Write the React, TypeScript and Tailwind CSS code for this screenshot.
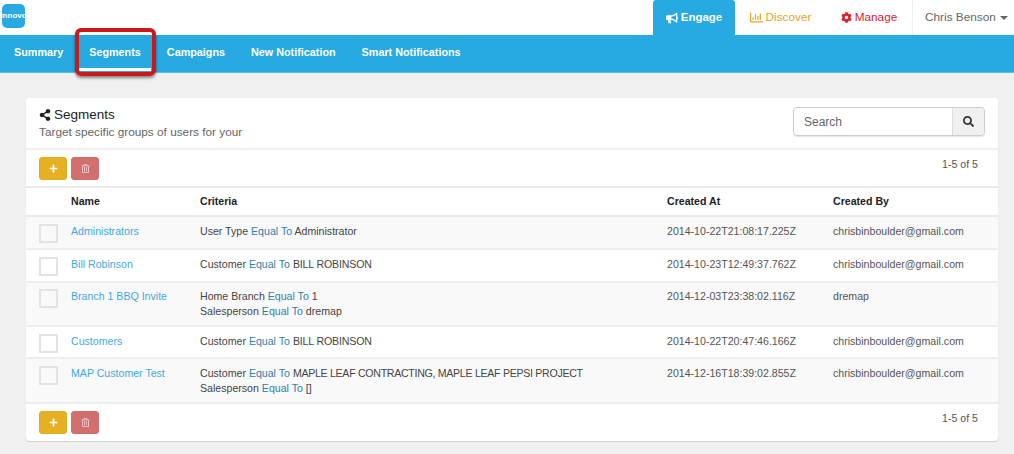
import React from "react";
import { FaBullhorn, FaCog, FaPlus, FaRegChartBar, FaRegTrashAlt, FaSearch, FaShareAlt } from "react-icons/fa";

const rows = [
  {
    name: "Administrators",
    criteria: [["User Type", "Administrator", ""]],
    createdAt: "2014-10-22T21:08:17.225Z",
    createdBy: "chrisbinboulder@gmail.com",
    height: "h-[33px] pt-[7px]",
  },
  {
    name: "Bill Robinson",
    criteria: [["Customer", "BILL ROBINSON", "tracking-[-0.15px]"]],
    createdAt: "2014-10-23T12:49:37.762Z",
    createdBy: "chrisbinboulder@gmail.com",
    height: "h-[33px] pt-[7px]",
  },
  {
    name: "Branch 1 BBQ Invite",
    criteria: [
      ["Home Branch", "1", ""],
      ["Salesperson", "dremap", ""],
    ],
    createdAt: "2014-12-03T23:38:02.116Z",
    createdBy: "dremap",
    height: "h-[44px] pt-[6px]",
  },
  {
    name: "Customers",
    criteria: [["Customer", "BILL ROBINSON", "tracking-[-0.15px]"]],
    createdAt: "2014-10-22T20:47:46.166Z",
    createdBy: "chrisbinboulder@gmail.com",
    height: "h-[32px] pt-[7px]",
  },
  {
    name: "MAP Customer Test",
    criteria: [
      ["Customer", "MAPLE LEAF CONTRACTING, MAPLE LEAF PEPSI PROJECT", "tracking-[-0.29px]"],
      ["Salesperson", "[]", ""],
    ],
    createdAt: "2014-12-16T18:39:02.855Z",
    createdBy: "chrisbinboulder@gmail.com",
    height: "h-[45px] pt-[7px]",
  },
];

const tabs = ["Summary", "Segments", "Campaigns", "New Notification", "Smart Notifications"];

const Toolbar = () => (
  <div className="flex h-[36px] items-start justify-between pl-[13px] pr-[20px] pt-[7px]">
    <div className="flex gap-[4px]">
      <button className="flex h-[23px] w-[28px] items-center justify-center rounded-[3px] border border-[#dfae1f] bg-[#e6b024] text-white">
        <FaPlus size={9} />
      </button>
      <button className="flex h-[23px] w-[28px] items-center justify-center rounded-[3px] border border-[#cf6c6c] bg-[#d26f6f] text-[#f3d0d0]">
        <FaRegTrashAlt size={9} />
      </button>
    </div>
    <span className="text-[10.6px] leading-[15px] text-[#555]">1-5 of 5</span>
  </div>
);

export default function App() {
  return (
    <div className="relative h-[454px] w-[1014px] overflow-hidden bg-[#f0f0f0] font-['Liberation_Sans',sans-serif] text-[10.6px] text-[#444]">
      {/* Top bar */}
      <header className="flex h-[35px] items-stretch bg-white">
        <div className="ml-[2px] mt-[4px] flex h-[24px] w-[23px] items-center justify-center overflow-hidden rounded-[5px] bg-[#27a9e1] text-[8px] font-bold text-white">
          innovo
        </div>
        <nav className="ml-auto flex whitespace-nowrap text-[11.8px]">
          <a className="flex w-[82px] items-center justify-center gap-[3px] rounded-t-[3px] bg-[#27a9e1] text-[11.5px] font-bold text-white">
            <FaBullhorn size={12} /> Engage
          </a>
          <a className="flex w-[91px] items-center justify-center gap-[3px] text-[#e0a62a]">
            <FaRegChartBar size={13} /> Discover
          </a>
          <a className="flex w-[87px] items-center justify-center gap-[3px] border-r border-[#eee] text-[#d9232a]">
            <FaCog size={11} /> Manage
          </a>
          <a className="flex w-[101px] items-center pl-[12px] text-[#666]">
            Chris Benson
            <span className="ml-[4px] border-x-[4px] border-t-[4px] border-x-transparent border-t-[#666]" />
          </a>
        </nav>
      </header>

      {/* Section tabs */}
      <nav className="flex h-[38px] items-stretch gap-[6px] border-b border-[#5cc0ea] bg-[#27a9e1] pl-[4px] text-[10.8px] font-bold text-white">
        {tabs.map((tab) => (
          <a
            key={tab}
            className={
              tab === "Segments"
                ? "mb-[1px] flex items-center border-b-[3px] border-white px-[10px] pt-[1px]"
                : "flex items-center px-[10px] pb-[3px]"
            }
          >
            {tab}
          </a>
        ))}
      </nav>

      {/* Segments card */}
      <main className="pl-[26px] pr-[16px] pt-[25px]">
        <section className="h-[343px] rounded-[4px] bg-white shadow-[0_1px_1px_rgba(0,0,0,0.15)]">
          <div className="flex h-[52px] items-start justify-between border-b-2 border-[#f0f0f0] pl-[13px] pr-[13px] pt-[9px]">
            <div>
              <h1 className="flex items-center gap-[3px] text-[13.5px] leading-[16px] text-[#222]">
                <FaShareAlt size={12} /> Segments
              </h1>
              <p className="mt-[1px] text-[11.8px] leading-[16px] text-[#666]">Target specific groups of users for your</p>
            </div>
            <div className="flex h-[29px] w-[192px] rounded-[4px] border border-[#ccc] shadow-[0_1px_1px_rgba(0,0,0,0.1)]">
              <input
                placeholder="Search"
                className="w-[159px] rounded-l-[4px] border-r border-[#ddd] px-[10px] text-[12px] text-[#555] outline-none placeholder:text-[#666]"
              />
              <button className="flex flex-1 items-center justify-center rounded-r-[4px] bg-[#f0f0f0] text-[#333]">
                <FaSearch size={11} />
              </button>
            </div>
          </div>

          <Toolbar />

          <div className="grid h-[31px] grid-cols-[45px_129px_467px_166px_1fr] items-center border-y-2 border-[#eaeaea] pt-[1px] font-bold text-[#222]">
            <span />
            <span>Name</span>
            <span>Criteria</span>
            <span>Created At</span>
            <span>Created By</span>
          </div>

          {rows.map((row, i) => (
            <div
              key={row.name}
              className={`grid grid-cols-[45px_129px_467px_166px_1fr] border-b-2 border-[#eee] leading-[15px] ${row.height} ${i % 2 === 0 ? "bg-[#f9f9f9]" : "bg-white"}`}
            >
              <span className="ml-[13px] h-[19px] w-[19px] border-2 border-[#e4e3de]" />
              <a className="text-[#3fa9e0]">{row.name}</a>
              <div>
                {row.criteria.map(([field, value, spacing]) => (
                  <div key={field}>
                    {field} <span className="text-[#2f7fa8]">Equal To</span> <span className={spacing}>{value}</span>
                  </div>
                ))}
              </div>
              <span className="text-[#555]">{row.createdAt}</span>
              <span className="text-[#555]">{row.createdBy}</span>
            </div>
          ))}

          <Toolbar />
        </section>
      </main>

      {/* Red callout round the Segments tab */}
      <div className="absolute left-[75px] top-[28px] h-[48px] w-[81px] rounded-[6px] border-[4px] border-[#c9191b] shadow-[0_2px_3px_rgba(0,0,0,0.45)]" />
    </div>
  );
}
